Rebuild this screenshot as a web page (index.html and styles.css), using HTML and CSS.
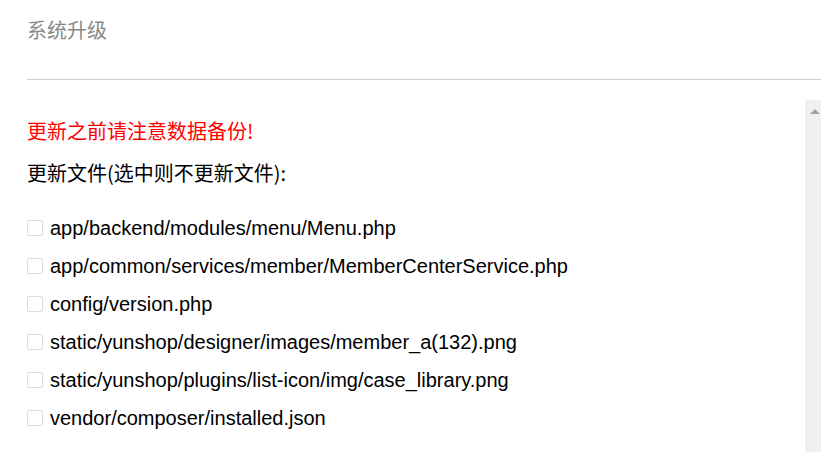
FILE: index.html
```html
<!DOCTYPE html>
<html lang="zh">
<head>
<meta charset="utf-8">
<title>系统升级</title>
<link rel="stylesheet" href="styles.css">
</head>
<body>
<div class="header">
  <h1 class="title">系统升级</h1>
</div>
<div class="panel">
  <div class="content">
    <p class="warn">更新之前请注意数据备份!</p>
    <p class="hint">更新文件(选中则不更新文件):</p>
    <ul class="files">
      <li class="file"><span class="box"></span><span>app/backend/modules/menu/Menu.php</span></li>
      <li class="file"><span class="box"></span><span>app/common/services/member/MemberCenterService.php</span></li>
      <li class="file"><span class="box"></span><span>config/version.php</span></li>
      <li class="file"><span class="box"></span><span>static/yunshop/designer/images/member_a(132).png</span></li>
      <li class="file"><span class="box"></span><span>static/yunshop/plugins/list-icon/img/case_library.png</span></li>
      <li class="file"><span class="box"></span><span>vendor/composer/installed.json</span></li>
    </ul>
  </div>
  <div class="scrollbar"><span class="arrow"></span></div>
</div>
</body>
</html>
```
FILE: styles.css
```css
html, body {
  margin: 0;
  padding: 0;
  background: #fff;
  overflow: hidden;
}
body {
  font-family: "Liberation Sans", Arial, "Noto Sans CJK SC", sans-serif;
  font-size: 20px;
  color: #000;
  width: 821px;
  height: 452px;
}
.header {
  margin-left: 27px;
  height: 80px;
  border-bottom: 1px solid #cfcfcf;
  box-sizing: border-box;
  padding-top: 18px;
}
.title {
  margin: 0;
  font-family: "Noto Sans CJK SC", sans-serif;
  font-weight: normal;
  font-size: 20px;
  line-height: 24px;
  color: #888;
}
.panel {
  margin-top: 20px;
  display: flex;
  height: 352px;
}
.content {
  flex: 1;
  padding-left: 27px;
}
.scrollbar {
  width: 16px;
  background: #f0f0f0;
  display: flex;
  justify-content: center;
  padding-top: 9px;
  box-sizing: border-box;
  padding-left: 4px;
}
.arrow {
  width: 0;
  height: 0;
  border-left: 5px solid transparent;
  border-right: 5px solid transparent;
  border-bottom: 5px solid #a3a3a3;
}
.warn {
  margin: 19px 0 0;
  line-height: 24px;
  color: #ff0000;
  font-family: "Noto Sans CJK SC", sans-serif;
}
.hint {
  margin: 18px 0 0;
  line-height: 24px;
  font-family: "Noto Sans CJK SC", sans-serif;
}
.files {
  list-style: none;
  margin: 24px 0 0;
  padding: 0;
}
.file {
  display: flex;
  align-items: center;
  height: 38px;
  gap: 7px;
}
.box {
  width: 16px;
  height: 16px;
  box-sizing: border-box;
  border: 1px solid #dcdce0;
  border-radius: 2px;
  background: #fff;
}
```
